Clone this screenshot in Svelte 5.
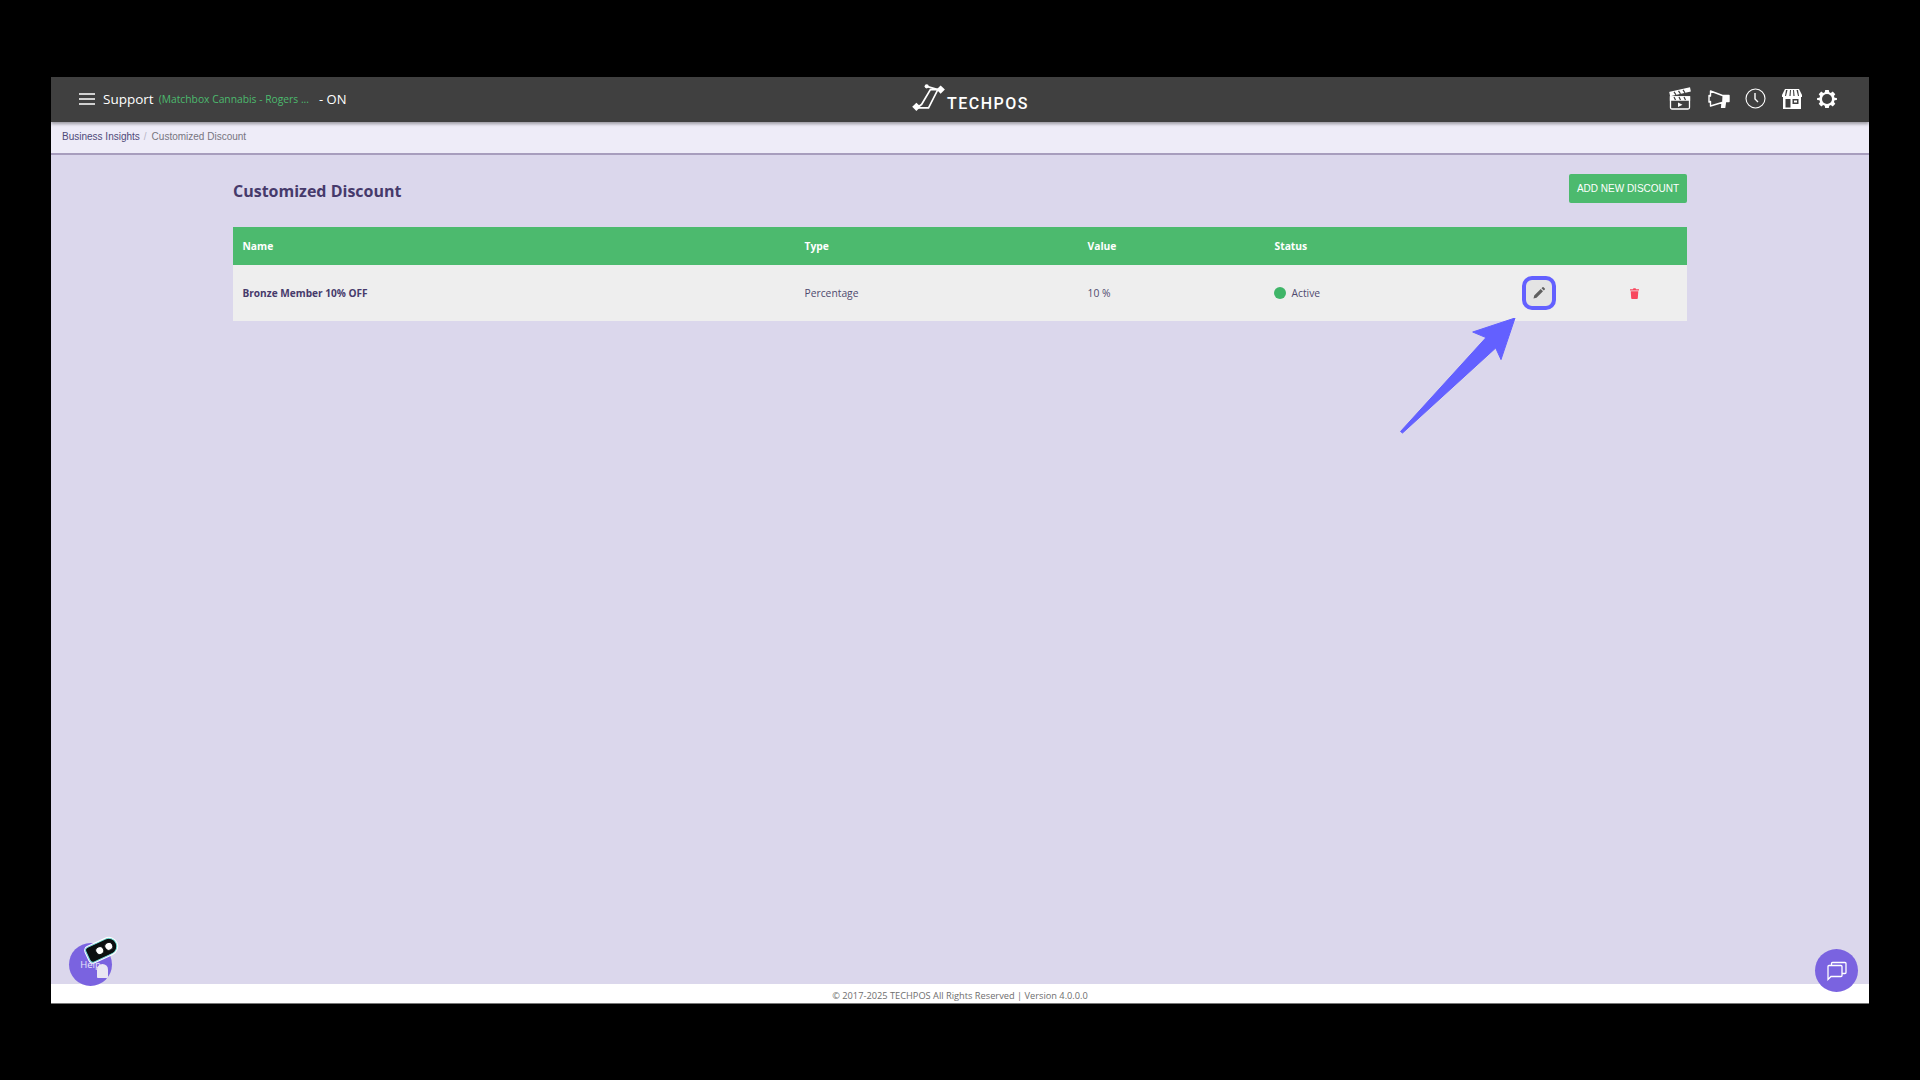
<script>
	const columns = ['Name', 'Type', 'Value', 'Status'];
	const discount = { name: 'Bronze Member 10% OFF', type: 'Percentage', value: '10 %', status: 'Active' };
</script>

<div class="page">
	<div class="window">
		<header class="topbar">
			<div class="left">
				<svg class="burger" viewBox="0 0 16 12" width="16" height="12">
					<path d="M0 1h16M0 6h16M0 11h16" stroke="#fff" stroke-width="1.6" fill="none" />
				</svg>
				<span class="support">Support</span>
				<span class="store">(Matchbox Cannabis - Rogers ...</span>
				<span class="on">- ON</span>
			</div>
			<div class="logo">
				<svg viewBox="0 0 36 30" width="34" height="28">
					<g fill="#fff">
						<path d="M30.500 1.500l4.500 4.500-4.500 4.500-4.500-4.500z" />
						<path d="M4.500 20l4.500 4.500-4.500 4.500L0 24.500z" />
						<circle cx="15.500" cy="2.500" r="2.200" />
					</g>
					<g fill="none" stroke="#fff" stroke-width="1.800">
						<path d="M30 6H19.500L10 22l-4 2.500" />
						<path d="M15.500 2.500l12 3.500L17.500 25.500H5" />
					</g>
				</svg>
				<span>TECHPOS</span>
			</div>
			<div class="tools">
				<svg class="clapper" viewBox="0 0 22 23" width="22" height="23" fill="none" stroke="#fff" stroke-width="1.300">
					<path d="M1.500 10h19v10.500a1.500 1.500 0 0 1-1.500 1.500H3a1.500 1.500 0 0 1-1.500-1.500z" />
					<path d="M1 5.500L20.500 1l.6 3L1.600 8.400z" fill="#fff" />
					<path d="M1.500 10h19v3h-19z" fill="#fff" />
					<path d="M9 15.500l4.500 2.200L9 20z" fill="#fff" stroke="none" />
					<path d="M5 4.800l2 3M9.500 3.800l2 3M14 2.800l2 3" stroke="#404040" stroke-width="1.200" />
					<path d="M5 10l1.500 3M10 10l1.500 3M15 10l1.500 3" stroke="#404040" stroke-width="1.200" />
				</svg>
				<svg viewBox="0 0 22 18" width="22" height="18">
					<path d="M1 5.500l1.500.5V1L14.500 5.500H21v6h-3.500l-.9 6.500h-3l.5-5.500L2.500 16v-4.500L1 12z" fill="none" stroke="#fff" stroke-width="1.400" stroke-linejoin="round" />
					<path d="M14.500 5.500H21v6h-3.500l-.9 6.500h-3l.5-5.500z" fill="#fff" />
				</svg>
				<svg viewBox="0 0 21 21" width="21" height="21" fill="none" stroke="#fff">
					<circle cx="10.500" cy="10.500" r="9.500" stroke-width="1.100" />
					<path d="M10 5v6l3 3" stroke-width="1.400" />
				</svg>
				<svg viewBox="0 0 20 20" width="20" height="20">
					<path d="M3 0h14l3 6v2H0V6z" fill="#fff" />
					<path d="M4 1h1.500L4 7H3zM8 1h1l-.4 6H7.400zM11 1h1l.6 6h-1.200zM14.500 1H16l1 6h-1z" fill="#404040" />
					<path d="M1 8h18v12H1z" fill="#fff" />
					<path d="M3.500 10h5v8.500h-5zM10.500 10h6v5h-6z" fill="#404040" />
					<path d="M12 11.500h3v2h-3z" fill="#fff" />
				</svg>
				<svg viewBox="0 0 20 20" width="20" height="20">
					<path d="M8 0h4l.5 2.600 1.700.7 2.200-1.500 2.800 2.800-1.500 2.200.7 1.700L21 9v2l-2.600.5-.7 1.700 1.500 2.200-2.800 2.800-2.200-1.500-1.700.7L12 20H8l-.5-2.600-1.700-.7-2.200 1.500-2.800-2.800 1.500-2.200-.7-1.700L-1 11V9l2.600-.5.7-1.700-1.500-2.200 2.800-2.800 2.200 1.500 1.700-.7z" fill="#fff" transform="translate(1 1) scale(.9)" />
					<circle cx="10" cy="10" r="5" fill="#404040" />
				</svg>
			</div>
		</header>

		<nav class="crumbs">
			<a href="#insights">Business Insights</a>
			<span class="sep">/</span>
			<span class="current">Customized Discount</span>
		</nav>

		<main class="content">
			<div class="heading">
				<h1>Customized Discount</h1>
				<button class="add">ADD NEW DISCOUNT</button>
			</div>

			<div class="table">
				<div class="row head">
					{#each columns as c}
						<div class="cell">{c}</div>
					{/each}
				</div>
				<div class="row body">
					<div class="cell name">{discount.name}</div>
					<div class="cell">{discount.type}</div>
					<div class="cell">{discount.value}</div>
					<div class="cell status"><i class="dot"></i>{discount.status}</div>
					<div class="action">
						<button class="edit" aria-label="Edit">
							<svg viewBox="0 0 12 12" width="12" height="12">
								<path d="M0.500 11.500l.7-3 6.500-6.500 2.300 2.300-6.500 6.500zM8.500 1.200L9.500.2a.7.7 0 0 1 1 0l1.300 1.300a.7.7 0 0 1 0 1l-1 1z" fill="#5f5f5f" />
							</svg>
						</button>
					</div>
					<div class="action">
						<svg viewBox="0 0 9 11" width="9" height="11">
							<path d="M0 1.300h3L3.400.3h2.200L6 1.300h3v1.200H0zM.7 3.300h7.600l-.5 7a.8.8 0 0 1-.8.7H2a.8.8 0 0 1-.8-.7z" fill="#f8475e" />
						</svg>
					</div>
				</div>
			</div>
		</main>

		<footer class="foot">© 2017-2025 TECHPOS All Rights Reserved | Version 4.0.0.0</footer>

		<svg class="arrow" viewBox="0 0 120 120" width="120" height="120">
			<path d="M115 0L72.700 14 86 19.600 0.500 113.500 2.500 115 95.700 30 101 41.600z" fill="#6360ff" stroke="#6360ff" stroke-width="1" stroke-linejoin="round" />
		</svg>

		<button class="help">Help</button>
		<div class="widget">
			<span class="capsule"><i></i><i></i></span>
			<span class="fin"></span>
		</div>

		<button class="chat" aria-label="Chat">
			<svg viewBox="0 0 20 20" width="20" height="20" fill="none" stroke="#fff" stroke-width="1.300">
				<path d="M1 5.500a1 1 0 0 1 1-1h12a1 1 0 0 1 1 1v9a1 1 0 0 1-1 1H4L1 18.500z" />
				<path d="M4.500 4.500V2.500a1 1 0 0 1 1-1H18a1 1 0 0 1 1 1v9a1 1 0 0 1-1 1h-3" />
			</svg>
		</button>
	</div>
</div>

<style>
	:global(body) {
		background: #000;
	}

	.page {
		width: 1920px;
		height: 1080px;
		padding: 77px 51px 76px;
		box-sizing: border-box;
		background: #000;
		font-family: 'Open Sans', sans-serif;
	}

	.window {
		position: relative;
		height: 100%;
		display: flex;
		flex-direction: column;
		background: #dbd7ec;
		overflow: hidden;
	}

	.topbar {
		height: 45px;
		flex: none;
		display: grid;
		grid-template-columns: 1fr auto 1fr;
		align-items: center;
		padding: 0 32px 2px 28px;
		box-sizing: border-box;
		background: #404040;
		box-shadow: 0 2px 3px rgba(0, 0, 0, 0.35);
		position: relative;
		color: #fff;
	}

	.left {
		display: flex;
		align-items: center;
	}

	.burger { margin-right: 8px; }
	.support { font-size: 13.500px; margin-right: 5px; }
	.store { font-size: 10.300px; color: #4cba6e; margin-right: 10px; }
	.on { font-size: 13px; }

	.logo {
		display: flex;
		align-items: flex-end;
		margin: 1px 0 0 25px;
	}

	.logo svg { margin: 0 1px 2px 0; }

	.logo span {
		font-family: Roboto, sans-serif;
		font-size: 16px;
		font-weight: 500;
		letter-spacing: 1.500px;
		line-height: 20px;
	}

	.tools {
		display: flex;
		justify-content: flex-end;
		align-items: center;
		gap: 15.500px;
	}

	.clapper { margin-right: 1.500px; }

	.crumbs {
		height: 33px;
		flex: none;
		display: flex;
		align-items: center;
		padding: 0 11px 3px;
		background: #eeecf8;
		border-bottom: 2px solid #a79dbd;
		box-sizing: border-box;
		font-family: 'Liberation Sans', Arial, sans-serif;
		font-size: 10px;
	}

	.crumbs a { color: #4f4a78; text-decoration: none; }
	.sep { color: #b9b6c8; margin: 0 5px 0 4px; }
	.current { color: #77757f; }

	.content {
		flex: 1;
		padding: 19px 182px 0;
	}

	.heading {
		display: flex;
		justify-content: space-between;
		align-items: flex-start;
		height: 53px;
	}

	h1 {
		margin: 5px 0 0;
		font-size: 16px;
		line-height: 24px;
		font-weight: 700;
		color: #463a6b;
	}

	.add {
		width: 118px;
		height: 29px;
		padding: 0 0 1px;
		border: none;
		border-radius: 2px;
		background: #4cba6e;
		color: #fff;
		font-family: 'Liberation Sans', Arial, sans-serif;
		font-size: 10px;
	}

	.row {
		display: grid;
		grid-template-columns: 562px 283px 187px 232px 84px 106px;
		align-items: center;
		font-size: 10.300px;
	}

	.head {
		height: 38px;
		background: #4cba6e;
		color: #fff;
		font-weight: 700;
	}

	.body {
		height: 56px;
		background: #eeeeee;
		color: #4f4a6e;
	}

	.cell { padding-left: 9.500px; }
	.name { font-size: 10.100px; font-weight: 700; color: #463a6b; }

	.status {
		display: flex;
		align-items: center;
		gap: 6px;
	}

	.dot {
		width: 12px;
		height: 12px;
		margin-left: -1px;
		border-radius: 50%;
		background: #3fb568;
	}

	.action {
		display: flex;
		justify-content: center;
		align-items: center;
	}

	.edit {
		width: 34px;
		height: 34px;
		padding: 0;
		box-sizing: border-box;
		display: flex;
		justify-content: center;
		align-items: center;
		border: 4px solid #6360ff;
		border-radius: 10px;
		background: #e4e4e4;
	}

	.foot {
		height: 20px;
		flex: none;
		padding-top: 4px;
		background: #fff;
		text-align: center;
		color: #6e6e6e;
		font-size: 9.250px;
		line-height: 16px;
		border-bottom: 1px solid #777;
		box-sizing: border-box;
	}

	.arrow {
		position: absolute;
		left: 1349px;
		top: 241px;
	}

	.help {
		position: absolute;
		left: 18px;
		top: 866px;
		width: 43px;
		height: 43px;
		padding: 0;
		border: none;
		border-radius: 50%;
		background: #7a63e0;
		color: #e8e4fa;
		font-family: 'Open Sans', sans-serif;
		font-size: 9.500px;
	}

	.widget {
		position: absolute;
		left: 35px;
		top: 858px;
		width: 34px;
		height: 46px;
	}

	.capsule {
		position: absolute;
		left: 0;
		top: 6px;
		width: 32px;
		height: 17px;
		display: flex;
		justify-content: flex-end;
		align-items: center;
		gap: 1px;
		padding-right: 3px;
		box-sizing: border-box;
		border-radius: 4px 9px 9px 4px;
		background: #0c0f10;
		border: 1px solid #6fe3d8;
		outline: 1px solid #fff;
		transform: rotate(-25deg);
	}

	.capsule i {
		width: 9px;
		height: 9px;
		border-radius: 50%;
		background: #fff;
		border: 1px solid #0c0f10;
		box-sizing: border-box;
	}

	.fin {
		position: absolute;
		left: 11px;
		top: 29px;
		width: 11px;
		height: 14px;
		border-radius: 6px 6px 1px 1px;
		background: #e9e6f3;
	}

	.chat {
		position: absolute;
		right: 11px;
		bottom: 12px;
		width: 43px;
		height: 43px;
		padding: 0;
		display: flex;
		justify-content: center;
		align-items: center;
		border: none;
		border-radius: 50%;
		background: #7a63e0;
	}
</style>
